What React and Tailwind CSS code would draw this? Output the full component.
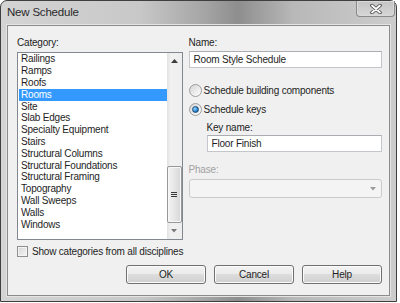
import React from "react";

const categories = [
  "Railings",
  "Ramps",
  "Roofs",
  "Rooms",
  "Site",
  "Slab Edges",
  "Specialty Equipment",
  "Stairs",
  "Structural Columns",
  "Structural Foundations",
  "Structural Framing",
  "Topography",
  "Wall Sweeps",
  "Walls",
  "Windows",
];

function Radio({ checked }) {
  return (
    <div className="w-[13px] h-[13px] rounded-full border border-[#9c9d9d] bg-[linear-gradient(135deg,#d4d4d4,#f2f2f2_70%,#ffffff)] flex items-center justify-center shrink-0">
      {checked && (
        <div className="w-[7px] h-[7px] rounded-full border border-[#1c4d7a] bg-[radial-gradient(circle_at_35%_35%,#9fd8ff,#2a8ad4_55%,#0c3f73)]" />
      )}
    </div>
  );
}

function Button({ children }) {
  return (
    <button className="w-[80px] h-[19px] rounded-[3px] border border-[#707070] bg-[linear-gradient(180deg,#f3f3f3_0%,#ebebeb_45%,#dddddd_50%,#cfcfcf_100%)] shadow-[inset_0_0_0_1px_#fbfbfb] text-[10px] tracking-[-0.2px] leading-[17px] text-[#1e1e1e]">
      {children}
    </button>
  );
}

export default function App() {
  return (
    <div className="w-[400px] h-[303px] bg-white font-['Liberation_Sans',Arial,sans-serif]">
      <div className="w-[397px] h-[302px] rounded-t-[7px] border border-[#3f3f3f] bg-[linear-gradient(90deg,#d4d4d4_0%,#c8c8c8_35%,#a4a4a4_52%,#8e8e8e_60%,#b8b8b8_74%,#cdcdcd_100%)] flex flex-col">
        {/* title bar */}
        <div className="h-[24px] flex justify-between">
          <div className="self-center pl-[6px] text-[11.5px] tracking-[-0.2px] text-[#2a2a2a]">New Schedule</div>
          <div className="mr-[1px] w-[39px] h-[16px] rounded-b-[4px] border border-t-0 border-[#8a8a8a] shadow-[inset_0_0_0_1px_#d9d9d9] bg-[linear-gradient(180deg,#c4c4c4,#d6d6d6)] flex items-center justify-center">
            <svg width="12" height="10" viewBox="0 0 12 10">
              <path d="M2 1.5 L10 8.5 M10 1.5 L2 8.5" stroke="#4a4a4a" strokeWidth="3.6" strokeLinecap="round" />
              <path d="M2 1.5 L10 8.5 M10 1.5 L2 8.5" stroke="#ffffff" strokeWidth="1.8" strokeLinecap="round" />
            </svg>
          </div>
        </div>

        {/* client area */}
        <div className="mx-[6px] mb-[5px] flex-1 border border-[#8c8c8c] shadow-[0_0_0_1px_#e4e4e4] bg-[#f0f0f0] pt-[10px] pl-[9px] pr-[7px] flex flex-col text-[10px] tracking-[-0.2px] text-[#1e1e1e]">
          <div className="flex gap-[6px]">
            {/* left column */}
            <div className="w-[166px] flex flex-col">
              <div className="leading-[13px]">Category:</div>
              <div className="mt-[3px] h-[188px] border border-[#828790] bg-white flex">
                <div className="flex-1 pt-[0.4px]">
                  {categories.map((c) => (
                    <div
                      key={c}
                      className={`ml-[1px] pl-[2px] h-[11.8px] leading-[11.8px] whitespace-nowrap ${
                        c === "Rooms" ? "bg-[#3399ff] text-white" : ""
                      }`}
                    >
                      {c}
                    </div>
                  ))}
                </div>
                <div className="w-[15px] flex flex-col bg-[linear-gradient(90deg,#e2e2e2,#f1f1f1_25%,#eeeeee)]">
                  <div className="h-[16px] flex items-center justify-center">
                    <svg width="7" height="4" viewBox="0 0 7 4">
                      <path d="M3.5 0 L7 4 L0 4 Z" fill="#3c3c3c" />
                    </svg>
                  </div>
                  <div className="flex-1" />
                  <div className="h-[57px] rounded-[2px] border border-[#979797] shadow-[inset_0_0_0_1px_#f8f8f8] bg-[linear-gradient(90deg,#f3f3f3,#e6e6e6_50%,#d6d6d6)] flex flex-col items-center justify-center gap-[1px]">
                    <div className="w-[6px] h-[1px] bg-[#3a3a3a]" />
                    <div className="w-[6px] h-[1px] bg-[#3a3a3a]" />
                    <div className="w-[6px] h-[1px] bg-[#3a3a3a]" />
                  </div>
                  <div className="h-[16px] flex items-center justify-center">
                    <svg width="6" height="4" viewBox="0 0 6 4">
                      <path d="M0 0 L6 0 L3 3.5 Z" fill="#7a7a7a" />
                    </svg>
                  </div>
                </div>
              </div>
            </div>

            {/* right column */}
            <div className="w-[194px] flex flex-col">
              <div className="leading-[13px]">Name:</div>
              <div className="mt-[2px] h-[17px] border border-[#c3c7cc] border-t-[#abadb3] bg-white pl-[4px] leading-[15px]">
                Room Style Schedule
              </div>
              <div className="mt-[15.5px] h-[13px] flex items-center gap-[2px]">
                <Radio />
                <span className="leading-[13px]">Schedule building components</span>
              </div>
              <div className="mt-[6px] h-[13px] flex items-center gap-[2px]">
                <Radio checked />
                <span className="leading-[13px]">Schedule keys</span>
              </div>
              <div className="ml-[18px] mt-[5px] leading-[13px]">Key name:</div>
              <div className="ml-[18px] mt-[1.5px] h-[17px] border border-[#c3c7cc] border-t-[#abadb3] bg-white pl-[4px] leading-[15px]">
                Floor Finish
              </div>
              <div className="mt-[10.5px] leading-[13px] text-[#a2a2a2]">Phase:</div>
              <div className="mt-[3.5px] h-[19px] rounded-[3px] border border-[#cbcbcb] bg-[#f4f4f4] flex items-center justify-end pr-[5px]">
                <svg width="6" height="4" viewBox="0 0 6 4">
                  <path d="M0 0 L6 0 L3 3.5 Z" fill="#9a9a9a" />
                </svg>
              </div>
            </div>
          </div>

          {/* checkbox row */}
          <div className="mt-[6px] h-[11px] flex items-center gap-[4px]">
            <div className="w-[11px] h-[11px] border border-[#8e8f8f] bg-[linear-gradient(135deg,#d6d6d6,#f6f6f6)] shadow-[inset_0_0_0_1px_#f4f4f4] shrink-0" />
            <span className="leading-[13px]">Show categories from all disciplines</span>
          </div>

          {/* buttons */}
          <div className="mt-[8px] flex justify-end gap-[8px]">
            <Button>OK</Button>
            <Button>Cancel</Button>
            <Button>Help</Button>
          </div>
        </div>
      </div>
    </div>
  );
}
